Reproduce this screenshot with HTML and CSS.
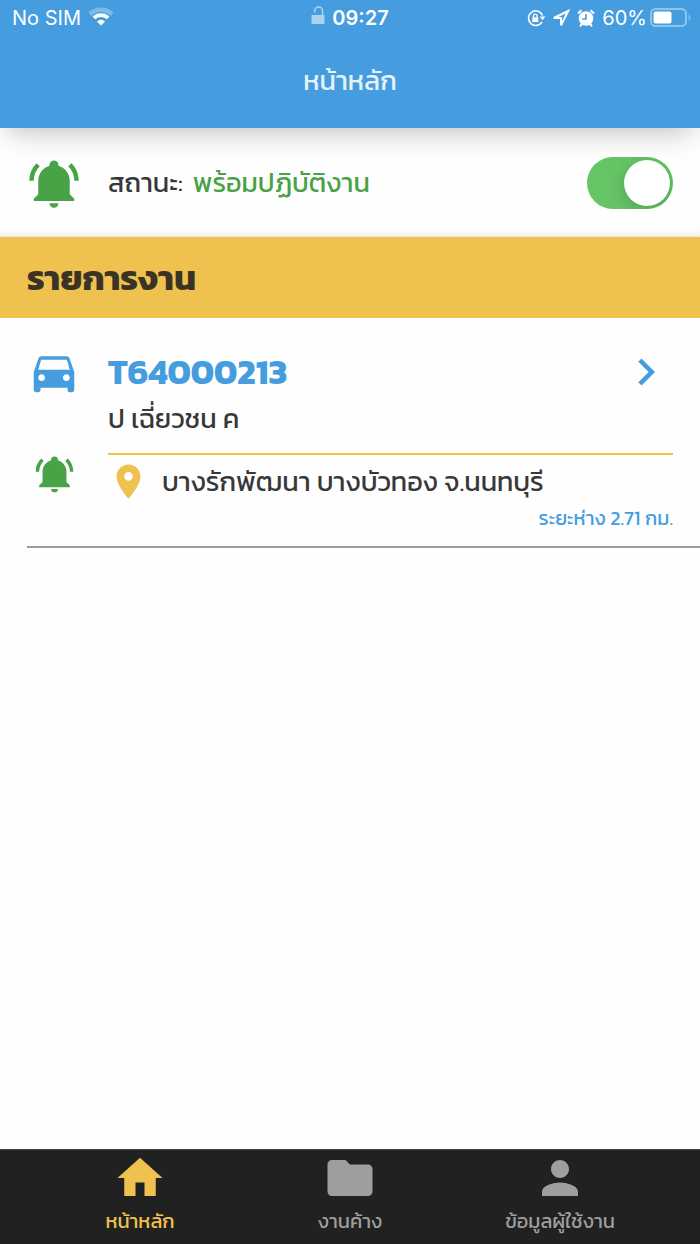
FILE: index.html
```html
<!DOCTYPE html>
<html lang="th">
<head>
<meta charset="utf-8">
<meta name="viewport" content="width=device-width, initial-scale=1">
<title>หน้าหลัก</title>
<link rel="stylesheet" href="styles.css">
</head>
<body>
<svg class="sprite" aria-hidden="true">
  <symbol id="bell" viewBox="0 0 24 24"><path d="M21 19v1H3v-1l2-2v-6c0-3.1 2.03-5.83 5-6.71V4a2 2 0 0 1 4 0v.29c2.97.88 5 3.61 5 6.71v6l2 2M14 21a2 2 0 0 1-4 0M19.75 3.19l-1.42 1.42A8.98 8.98 0 0 1 21 11h2c0-2.93-1.16-5.75-3.25-7.81M1 11h2c0-2.4.96-4.7 2.67-6.39L4.25 3.19A10.96 10.96 0 0 0 1 11z"/></symbol>
</svg>
<div class="app">
  <header class="top">
    <div class="statusbar">
      <div class="sb-left">
        <span>No SIM</span>
        <svg class="wifi" viewBox="0 0 26 24"><path class="dim" d="M0.5 6.500a18 18 0 0 1 25 0l-3 3.400a13.600 13.600 0 0 0-19 0z"/><path d="M4.600 10.600a12 12 0 0 1 16.800 0l-2.600 2.700a8.300 8.300 0 0 0-11.600 0zM8.900 15.400a6.400 6.400 0 0 1 8.200 0L13 19.600z"/></svg>
      </div>
      <div class="sb-mid">
        <svg class="lock" viewBox="0 0 14 24"><path d="M0.5 9h13v9H0.500z"/><path class="shackle" d="M11.500 9V4.800a3.900 3.900 0 0 0-7.800 0V6.500"/></svg>
        <span>09:27</span>
      </div>
      <div class="sb-right">
        <svg class="s-icon" viewBox="0 0 18 18"><path class="line ring" d="M15 13A7.300 7.300 0 1 1 15.600 6.500"/><path d="M12.800 7.500h5.600l-2.800 3.800zM5.300 8.300h6v4.800h-6z"/><path class="line thin" d="M6.500 8.500V6.900a1.800 1.800 0 0 1 3.600 0v1.600"/></svg>
        <svg class="s-icon" viewBox="0 0 18 18"><path class="line" d="M16.200 2L1.800 9H9v7.200z"/></svg>
        <svg class="s-icon" viewBox="0 0 18 18"><circle cx="9" cy="9.500" r="7.300"/><path class="line" d="M1 4.500L4.500 1.200M17 4.500L13.500 1.200M3 17.300l2-2.300M15 17.300L13 15"/><path class="cut" d="M9 5v5H5.200"/></svg>
        <span>60%</span>
        <svg class="battery" viewBox="0 0 42 20"><rect class="shell" x="1" y="1" width="35" height="17" rx="4.500"/><rect x="3.500" y="3.500" width="18" height="12" rx="2"/><path class="dim" d="M38.500 6.500c2.700 1 2.700 5.500 0 6.500z"/></svg>
      </div>
    </div>
    <h1 class="title">หน้าหลัก</h1>
  </header>

  <main class="content">
    <section class="duty">
      <svg class="icon-lg green"><use href="#bell"/></svg>
      <label class="duty-label" for="duty"><span>สถานะ:</span> <span class="green">พร้อมปฏิบัติงาน</span></label>
      <input class="switch" type="checkbox" id="duty" role="switch" checked>
    </section>

    <h2 class="section-title">รายการงาน</h2>

    <article class="job">
      <div class="job-icons">
        <svg class="icon-lg blue" viewBox="0 0 24 24"><path d="M18.920 6.010C18.720 5.420 18.160 5 17.500 5h-11c-.66 0-1.210.42-1.420 1.010L3 12v8c0 .55.45 1 1 1h1c.55 0 1-.45 1-1v-1h12v1c0 .55.45 1 1 1h1c.55 0 1-.45 1-1v-8l-2.080-5.990zM6.500 16c-.83 0-1.500-.67-1.500-1.500S5.670 13 6.500 13s1.500.67 1.500 1.500S7.330 16 6.500 16zm11 0c-.83 0-1.500-.67-1.500-1.500s.67-1.500 1.500-1.500 1.500.67 1.500 1.500-.67 1.500-1.500 1.500zM5 11l1.270-4.500h11.460L19 11H5z"/></svg>
        <svg class="icon-md green"><use href="#bell"/></svg>
      </div>
      <div class="job-body">
        <div class="job-head">
          <a class="job-id" href="#job">T64000213</a>
          <svg class="icon-lg blue" viewBox="0 0 24 24"><path d="M10 6L8.590 7.410 13.170 12l-4.580 4.590L10 18l6-6z"/></svg>
        </div>
        <p class="job-name">ป เฉี่ยวชน ค</p>
        <div class="place">
          <svg class="icon-md yellow" viewBox="0 0 24 24"><path d="M12 2C8.130 2 5 5.130 5 9c0 5.250 7 13 7 13s7-7.750 7-13c0-3.870-3.130-7-7-7zm0 9.500a2.500 2.500 0 0 1 0-5 2.500 2.500 0 0 1 0 5z"/></svg>
          <span>บางรักพัฒนา บางบัวทอง จ.นนทบุรี</span>
        </div>
        <p class="distance">ระยะห่าง 2.71 กม.</p>
      </div>
    </article>
  </main>

  <nav class="tabs">
    <a class="tab active" href="#home"><svg class="icon-lg" viewBox="0 0 24 24"><path d="M10 20v-6h4v6h5v-8h3L12 3 2 12h3v8z"/></svg><span>หน้าหลัก</span></a>
    <a class="tab" href="#pending"><svg class="icon-lg" viewBox="0 0 24 24"><path d="M10 4H4c-1.100 0-2 .9-2 2v12c0 1.100.9 2 2 2h16c1.100 0 2-.9 2-2V8c0-1.100-.9-2-2-2h-8l-2-2z"/></svg><span>งานค้าง</span></a>
    <a class="tab" href="#profile"><svg class="icon-lg" viewBox="0 0 24 24"><path d="M12 12c2.210 0 4-1.790 4-4s-1.790-4-4-4-4 1.790-4 4 1.790 4 4 4zm0 2c-2.670 0-8 1.340-8 4v2h16v-2c0-2.660-5.330-4-8-4z"/></svg><span>ข้อมูลผู้ใช้งาน</span></a>
  </nav>
</div>
</body>
</html>
```
FILE: styles.css
```css
* { box-sizing: border-box; }
body {
  margin: 0;
  background: #fefefe;
  color: #383838;
  font-family: Kanit, Prompt, "Noto Sans Thai", Inter, "Noto Sans", sans-serif;
}
h1, h2, p { margin: 0; }
a { text-decoration: none; color: inherit; }
svg { fill: currentColor; flex: none; display: block; }
.sprite { position: absolute; width: 0; height: 0; }
.app { min-height: 100vh; display: flex; flex-direction: column; }
.green { color: #48a346; }
.blue { color: #459ddf; }
.yellow { color: #efc24f; }
.icon-lg { width: 54px; height: 54px; }
.icon-md { width: 41px; height: 41px; }

.top {
  background: #459ddf;
  color: #fff;
  box-shadow: 0 14px 24px -8px rgba(0, 0, 0, .22);
  z-index: 1;
}
.statusbar {
  display: grid;
  grid-template-columns: 1fr auto 1fr;
  align-items: center;
  height: 36px;
  padding: 0 12px;
  font: 20px/36px Inter, sans-serif;
}
.sb-left, .sb-mid, .sb-right { display: flex; align-items: center; gap: 7px; }
.sb-mid { font-weight: 600; }
.sb-right { justify-content: flex-end; }
.dim { opacity: .3; }
.wifi { width: 26px; height: 24px; }
.lock { width: 14px; height: 24px; opacity: .55; }
.shackle { fill: none; stroke: currentColor; stroke-width: 1.5; }
.s-icon { width: 18px; height: 18px; overflow: visible; }
.line { fill: none; stroke: currentColor; stroke-width: 2; }
.ring { stroke-width: 1.6; }
.thin { stroke-width: 1.3; }
.cut { fill: none; stroke: #459ddf; stroke-width: 1.6; }
.battery { width: 42px; height: 20px; }
.sb-right .battery { margin: 0 -4px; }
.shell { fill: none; stroke: #8dc4ec; stroke-width: 2; }
.title {
  padding: 25px 0 27px;
  font-size: 27px;
  line-height: 40px;
  font-weight: 400;
  text-align: center;
  color: #e6f2fb;
}

.content { flex: 1; }
.duty {
  display: flex;
  align-items: center;
  gap: 27px;
  height: 109px;
  padding: 0 27px;
  box-shadow: inset 0 -8px 8px -8px rgba(0, 0, 0, .15);
}
.duty-label {
  flex: 1;
  display: flex;
  gap: 10px;
  font-size: 27px;
  line-height: 40px;
}
.switch {
  appearance: none;
  width: 86px;
  height: 52px;
  margin: 0;
  padding: 3px;
  border-radius: 26px;
  background: #ddd;
  display: flex;
}
.switch::before {
  content: "";
  width: 46px;
  height: 46px;
  border-radius: 50%;
  background: #fff;
  box-shadow: 0 4px 16px rgba(0, 0, 0, .18);
}
.switch:checked { background: #65c466; justify-content: flex-end; overflow: hidden; }

.section-title {
  padding: 17px 27px 16px;
  background: #efc24f;
  color: #3b3424;
  font-size: 35px;
  line-height: 48px;
  font-weight: 700;
}

.job {
  display: flex;
  gap: 27px;
  margin-left: 27px;
  padding: 27px 27px 12px 0;
  border-bottom: 2px solid #9c9c9c;
}
.job-icons {
  display: flex;
  flex-direction: column;
  align-items: center;
  gap: 54px;
}
.job-body { flex: 1; min-width: 0; }
.job-head { display: flex; justify-content: space-between; align-items: center; }
.job-id { font-size: 35px; line-height: 54px; font-weight: 700; color: #459ddf; }
.job-name {
  padding-bottom: 14px;
  border-bottom: 2px solid #efc24f;
  font-size: 27px;
  line-height: 40px;
}
.place {
  display: flex;
  gap: 13px;
  padding-top: 6px;
  font-size: 27px;
  line-height: 41px;
}
.distance { font-size: 20px; line-height: 32px; text-align: right; color: #459ddf; }

.tabs {
  display: grid;
  grid-template-columns: repeat(3, 1fr);
  height: 95px;
  padding: 1px 35px 0;
  background: #212121;
  border-top: 1px solid #444;
}
.tab {
  display: flex;
  flex-direction: column;
  align-items: center;
  color: #9e9e9e;
  font-size: 20px;
  line-height: 32px;
}
.tab.active { color: #efc24f; }
```
